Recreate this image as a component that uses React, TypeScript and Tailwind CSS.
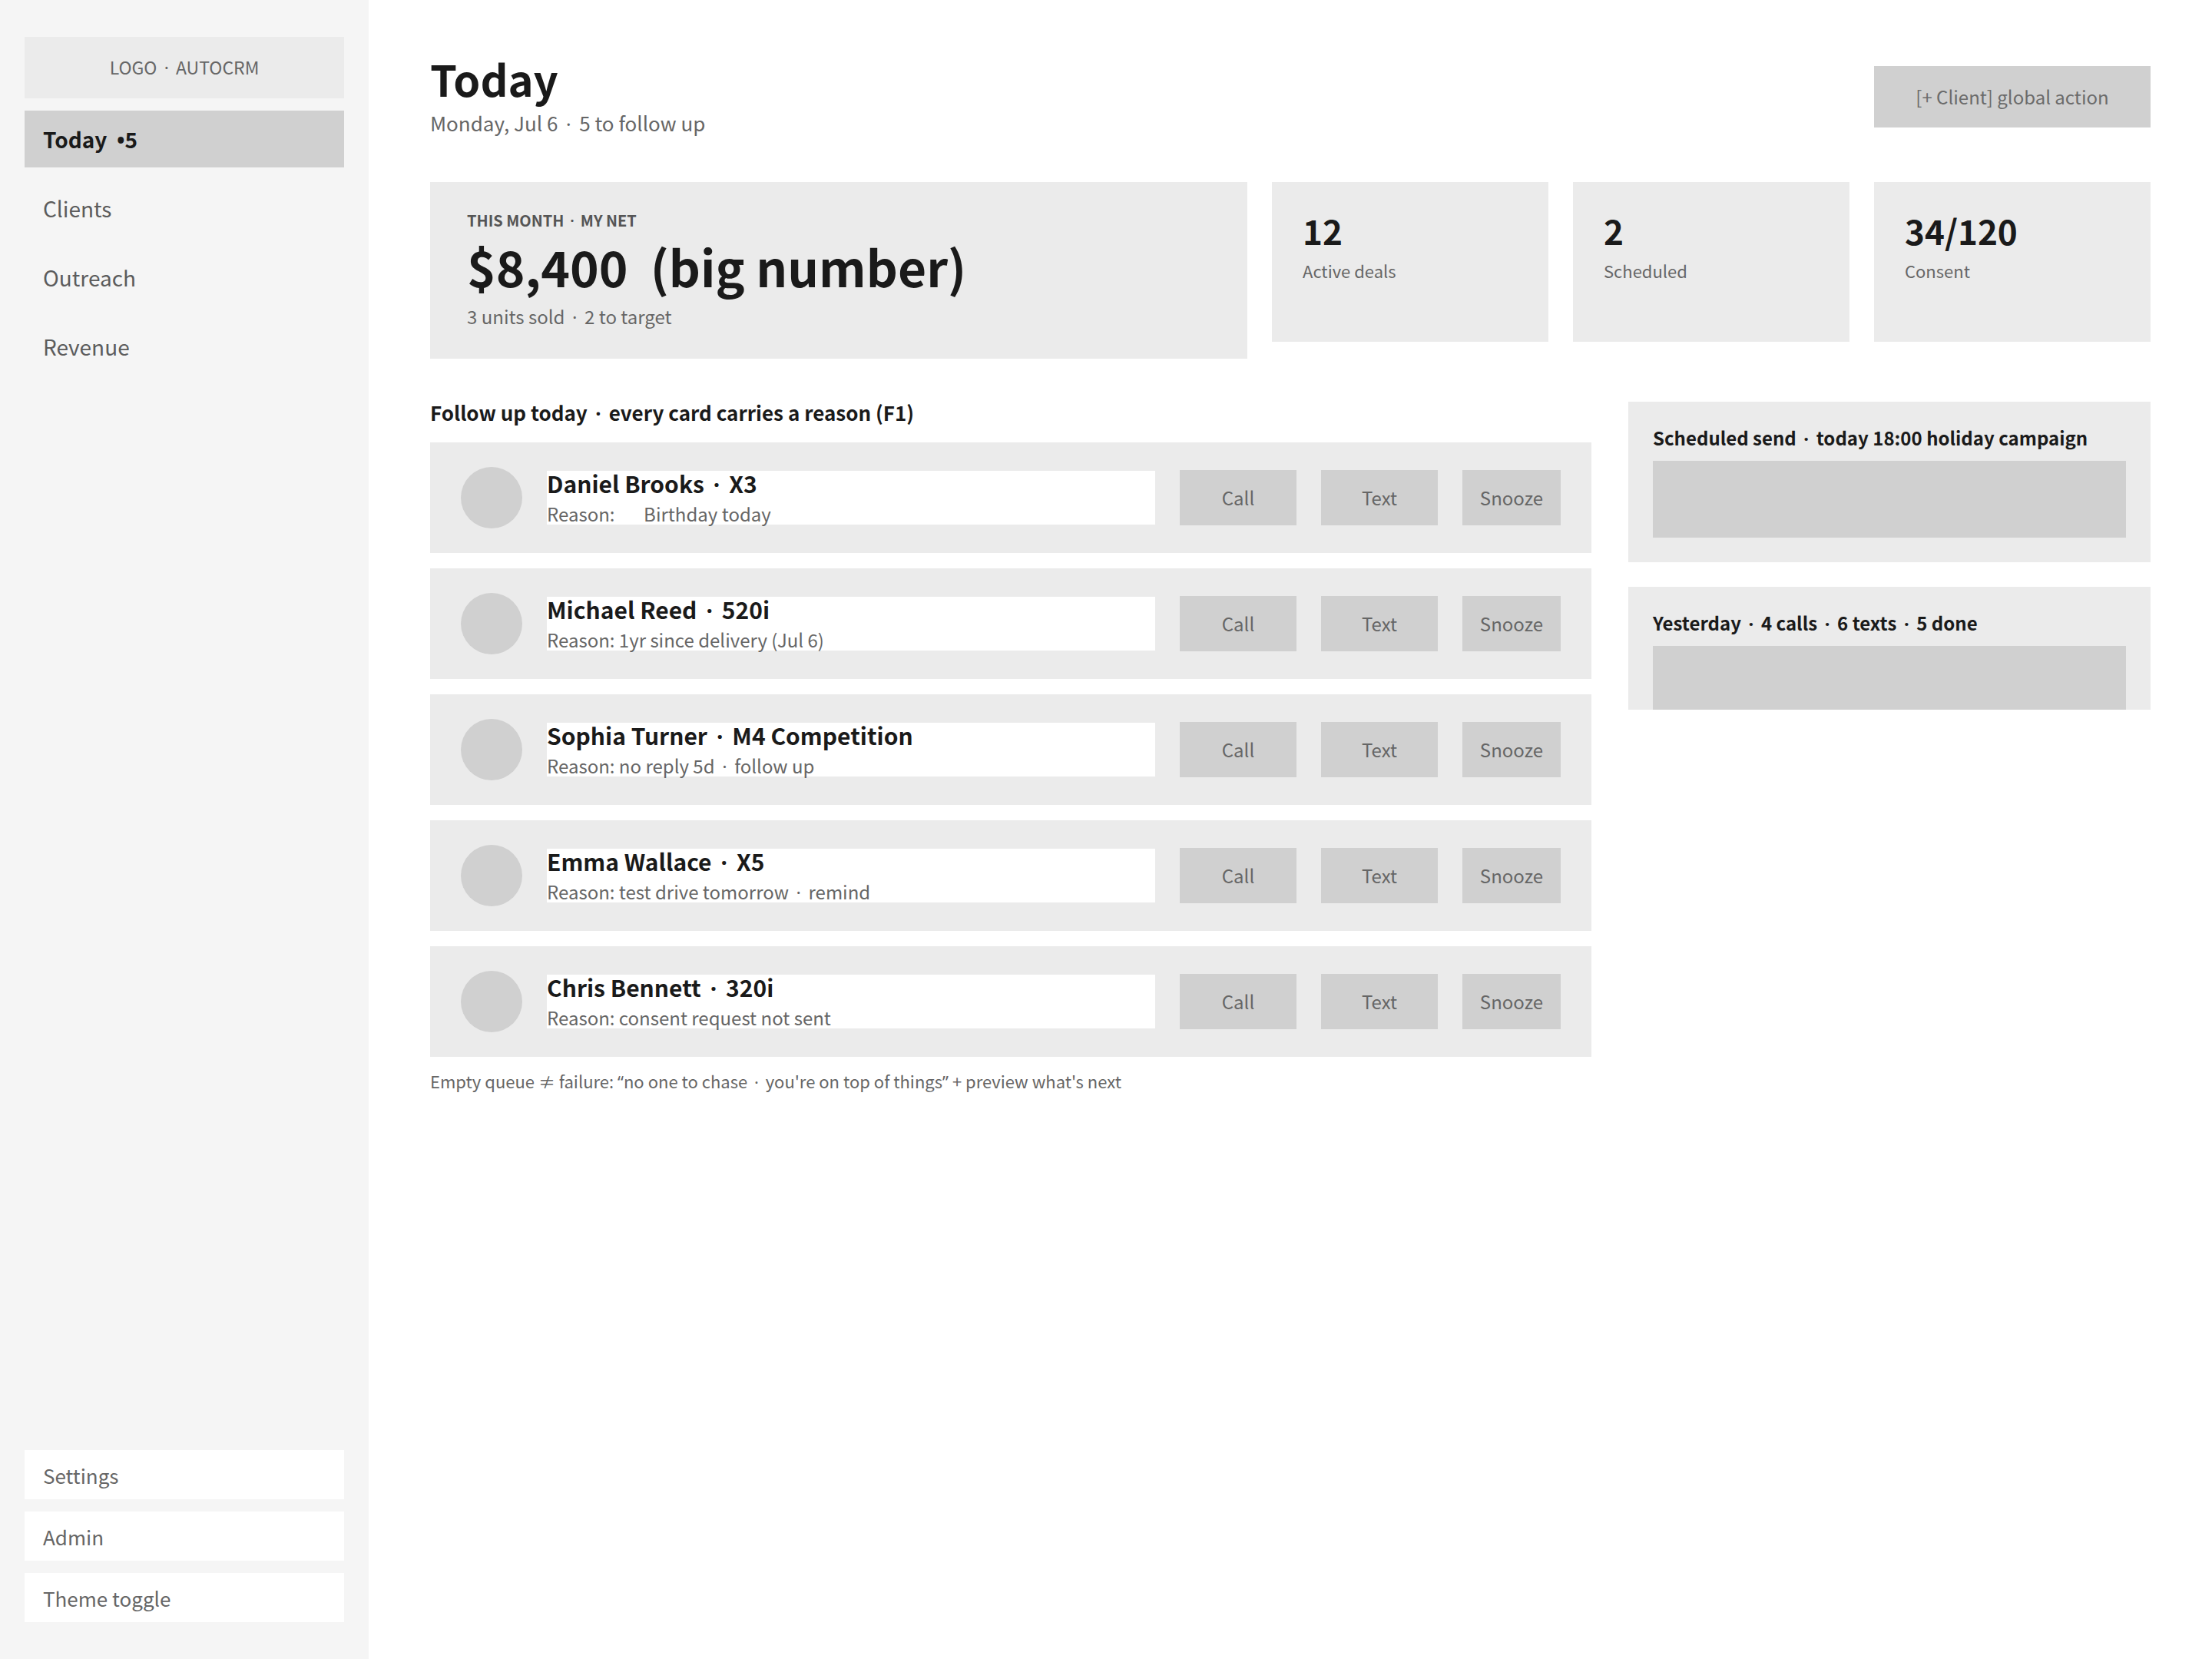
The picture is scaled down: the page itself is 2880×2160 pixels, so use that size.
import React from "react";

const NAV = ["Clients", "Outreach", "Revenue"];
const FOOT = ["Settings", "Admin", "Theme toggle"];

const FOLLOWUPS = [
  { name: "Daniel Brooks · X3", reason: "Reason:\u00a0\u00a0\u00a0\u00a0\u00a0\u00a0\u00a0Birthday today" },
  { name: "Michael Reed · 520i", reason: "Reason: 1yr since delivery (Jul 6)" },
  { name: "Sophia Turner · M4 Competition", reason: "Reason: no reply 5d · follow up" },
  { name: "Emma Wallace · X5", reason: "Reason: test drive tomorrow · remind" },
  { name: "Chris Bennett · 320i", reason: "Reason: consent request not sent" },
];

const STATS = [
  { value: "12", label: "Active deals" },
  { value: "2", label: "Scheduled" },
  { value: "34/120", label: "Consent" },
];

// Latin punctuation set in a Latin face so it keeps its narrow width
function Dot() {
  return <span className="font-['Noto_Sans',sans-serif] mx-[0.14em]"> · </span>;
}

function Latin({ children }: { children: React.ReactNode }) {
  return <span className="font-['Noto_Sans',sans-serif]">{children}</span>;
}

function Dotted({ text }: { text: string }) {
  const parts = text.split(" · ");
  return (
    <>
      {parts.map((p, i) => (
        <React.Fragment key={i}>
          {i > 0 && <Dot />}
          {p}
        </React.Fragment>
      ))}
    </>
  );
}

function FollowCard({ name, reason }: { name: string; reason: string }) {
  return (
    <div className="h-[144px] bg-[#ebebeb] px-[40px] flex items-center gap-[32px]">
      <div className="w-[80px] h-[80px] rounded-full bg-[#d0d0d0] shrink-0" />
      <div className="flex-1 h-[70px] bg-white flex flex-col">
        <div className="text-[30px] leading-[32px] font-bold text-[#1a1a1a]">
          <Dotted text={name} />
        </div>
        <div className="mt-[6px] text-[24px] leading-[32px] text-[#666]">
          <Dotted text={reason} />
        </div>
      </div>
      <button className="w-[152px] h-[72px] bg-[#d0d0d0] text-[24px] text-[#666] flex items-center justify-center">
        Call
      </button>
      <button className="w-[152px] h-[72px] bg-[#d0d0d0] text-[24px] text-[#666] flex items-center justify-center">
        Text
      </button>
      <button className="w-[128px] h-[72px] bg-[#d0d0d0] text-[24px] text-[#666] flex items-center justify-center">
        Snooze
      </button>
    </div>
  );
}

export default function App() {
  return (
    <div className="flex w-[2880px] h-[2160px] bg-white font-['Noto_Sans_CJK_SC','Noto_Sans',sans-serif]">
      {/* sidebar */}
      <aside className="w-[480px] shrink-0 bg-[#f5f5f5] flex flex-col justify-between px-[32px] pt-[48px] pb-[48px]">
        <div className="flex flex-col gap-[16px]">
          <div className="h-[80px] bg-[#ebebeb] flex items-center justify-center text-[23px] text-[#666]">
            <span>
              LOGO<Dot />AUTOCRM
            </span>
          </div>
          <div className="h-[74px] bg-[#d0d0d0] flex items-center px-[24px] text-[28px] font-bold text-[#1a1a1a]">
            <span className="whitespace-pre">
              {"Today  "}
              <Latin>•</Latin>5
            </span>
          </div>
          {NAV.map((n) => (
            <div key={n} className="h-[74px] flex items-center px-[24px] text-[28px] text-[#5c5c5c]">
              {n}
            </div>
          ))}
        </div>
        <div className="flex flex-col gap-[16px]">
          {FOOT.map((n) => (
            <div key={n} className="h-[64px] bg-white flex items-center px-[24px] text-[26px] text-[#666]">
              {n}
            </div>
          ))}
        </div>
      </aside>

      {/* main */}
      <main className="flex-1 px-[80px] pt-[66px]">
        <header className="flex justify-between items-start">
          <div className="flex flex-col">
            <h1 className="text-[56px] leading-[72px] font-bold text-[#1a1a1a]">Today</h1>
            <div className="mt-[4px] text-[26px] leading-[36px] text-[#666]">
              <Dotted text="Monday, Jul 6 · 5 to follow up" />
            </div>
          </div>
          <button className="mt-[20px] w-[360px] h-[80px] bg-[#d0d0d0] text-[24px] text-[#6b6b6b] flex items-center justify-center">
            [+ Client] global action
          </button>
        </header>

        <section className="mt-[58px] grid grid-cols-[1fr_360px_360px_360px] gap-[32px] items-start">
          <div className="bg-[#ebebeb] px-[48px] pt-[36px] pb-[37px] flex flex-col">
            <div className="text-[20px] leading-[28px] font-semibold text-[#555]">
              THIS MONTH<Dot />MY NET
            </div>
            <div className="mt-[2px] text-[64px] leading-[84px] font-bold text-[#1a1a1a] whitespace-pre">
              {"$8,400  (big number)"}
            </div>
            <div className="mt-[7px] text-[24px] leading-[34px] text-[#666]">
              <Dotted text="3 units sold · 2 to target" />
            </div>
          </div>
          {STATS.map((s) => (
            <div key={s.label} className="h-[208px] bg-[#ebebeb] px-[40px] pt-[35px] flex flex-col">
              <div className="text-[44px] leading-[56px] font-bold text-[#1a1a1a]">{s.value}</div>
              <div className="mt-[8px] text-[22px] leading-[32px] text-[#666]">{s.label}</div>
            </div>
          ))}
        </section>

        <section className="mt-[52px] flex gap-[48px] items-start">
          <div className="w-[1512px] flex flex-col">
            <h2 className="text-[26px] leading-[36px] font-bold text-[#1a1a1a]">
              <Dotted text="Follow up today · every card carries a reason (F1)" />
            </h2>
            <div className="mt-[20px] flex flex-col gap-[20px]">
              {FOLLOWUPS.map((f) => (
                <FollowCard key={f.name} name={f.name} reason={f.reason} />
              ))}
            </div>
            <p className="mt-[16px] text-[22px] leading-[30px] text-[#666]">
              Empty queue ≠ failure: <Latin>“</Latin>no one to chase<Dot />you're on top of things<Latin>”</Latin> + preview what's next
            </p>
          </div>

          <div className="w-[680px] mt-[4px] flex flex-col gap-[32px]">
            <div className="bg-[#ebebeb] px-[32px] pt-[29px] pb-[32px] flex flex-col gap-[11px]">
              <div className="text-[24px] leading-[36px] font-bold text-[#1a1a1a]">
                <Dotted text="Scheduled send · today 18:00 holiday campaign" />
              </div>
              <div className="h-[100px] bg-[#d0d0d0]" />
            </div>
            <div className="h-[160px] overflow-hidden bg-[#ebebeb] px-[32px] pt-[29px] flex flex-col gap-[11px]">
              <div className="text-[24px] leading-[36px] font-bold text-[#1a1a1a]">
                <Dotted text="Yesterday · 4 calls · 6 texts · 5 done" />
              </div>
              <div className="h-[100px] shrink-0 bg-[#d0d0d0]" />
            </div>
          </div>
        </section>
      </main>
    </div>
  );
}
